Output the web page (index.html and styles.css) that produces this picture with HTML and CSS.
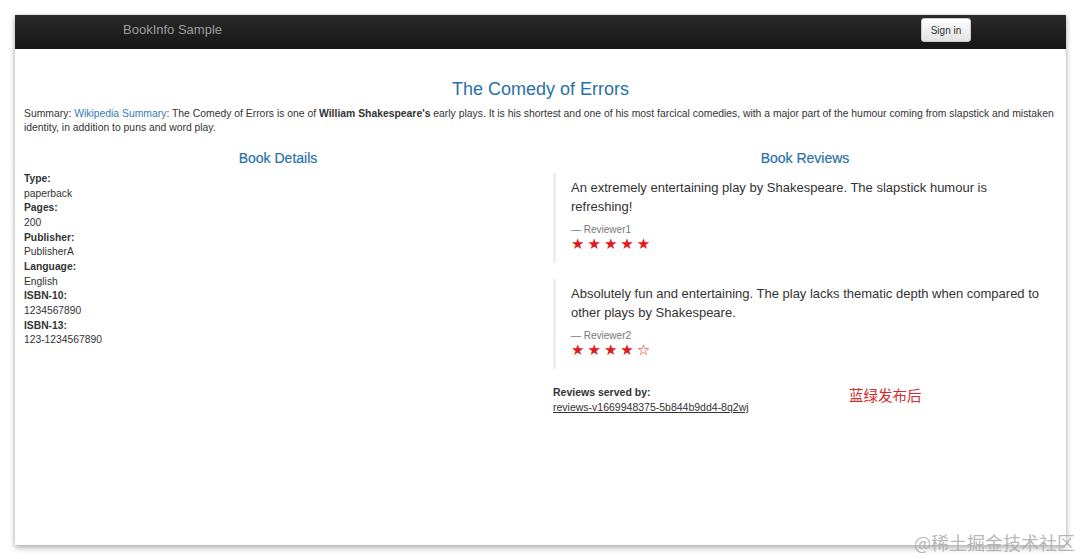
FILE: index.html
```html
<!DOCTYPE html>
<html>
<head>
<meta charset="utf-8">
<link rel="stylesheet" href="styles.css">
</head>
<body>
<div class="window">
  <nav class="navbar">
    <span class="brand">BookInfo Sample</span>
    <button class="signin">Sign in</button>
  </nav>
  <main class="content">
    <h1 class="title">The Comedy of Errors</h1>
    <p class="summary">Summary: <a href="#">Wikipedia Summary</a>: The Comedy of Errors is one of <b>William Shakespeare's</b> early plays. It is his shortest and one of his most farcical comedies, with a major part of the humour coming from slapstick and mistaken identity, in addition to puns and word play.</p>
    <div class="columns">
      <section class="details">
        <h2 class="heading">Book Details</h2>
        <dl class="dlist">
          <dt>Type:</dt><dd>paperback</dd>
          <dt>Pages:</dt><dd>200</dd>
          <dt>Publisher:</dt><dd>PublisherA</dd>
          <dt>Language:</dt><dd>English</dd>
          <dt>ISBN-10:</dt><dd>1234567890</dd>
          <dt>ISBN-13:</dt><dd>123-1234567890</dd>
        </dl>
      </section>
      <section class="reviews">
        <h2 class="heading">Book Reviews</h2>
        <blockquote class="review">
          <p class="rtext">An extremely entertaining play by Shakespeare. The slapstick humour is refreshing!</p>
          <small class="reviewer">— Reviewer1</small>
          <div class="stars">★★★★★</div>
        </blockquote>
        <blockquote class="review">
          <p class="rtext">Absolutely fun and entertaining. The play lacks thematic depth when compared to other plays by Shakespeare.</p>
          <small class="reviewer">— Reviewer2</small>
          <div class="stars">★★★★☆</div>
        </blockquote>
        <div class="served">
          <b>Reviews served by:</b>
          <a href="#">reviews-v1669948375-5b844b9dd4-8q2wj</a>
        </div>
      </section>
    </div>
  </main>
  <div class="note">蓝绿发布后</div>
</div>
<div class="watermark">@稀土掘金技术社区</div>
</body>
</html>
```
FILE: styles.css
```css
html, body {
  margin: 0;
  padding: 0;
  background: #fff;
  width: 1080px;
  height: 559px;
  overflow: hidden;
  font-family: "Liberation Sans", Arial, sans-serif;
  color: #333;
}
body {
  position: relative;
  padding: 15px 0 0 15px;
  box-sizing: border-box;
}
.window {
  position: relative;
  width: 1051px;
  height: 530px;
  background: #fff;
  box-shadow: 0 3px 6px rgba(0,0,0,0.28), 0 0 4px rgba(0,0,0,0.12);
}
.navbar {
  height: 34px;
  background: linear-gradient(#2a2a2a, #161616);
  display: flex;
  align-items: flex-start;
  justify-content: space-between;
  padding: 3px 95px 0 108px;
  box-sizing: border-box;
}
.brand {
  color: #9d9d9d;
  font-size: 13px;
  line-height: 24px;
}
.signin {
  width: 50px;
  height: 24px;
  background: linear-gradient(#fff, #e2e2e2);
  border: 1px solid #ccc;
  border-radius: 3px;
  font-family: "Liberation Sans", Arial, sans-serif;
  font-size: 10px;
  color: #333;
  padding: 0;
}
.content {
  padding: 0 9px;
}
.title {
  margin: 29px 0 0;
  text-align: center;
  font-size: 18px;
  font-weight: normal;
  color: #2a6fa8;
  line-height: 22px;
}
.summary {
  margin: 7px 0 0;
  font-size: 10.38px;
  line-height: 14px;
}
.summary a {
  color: #337ab7;
  text-decoration: none;
}
.columns {
  display: grid;
  grid-template-columns: 508px 1fr;
  column-gap: 21px;
  margin-top: 15px;
}
.heading {
  margin: 0;
  text-align: center;
  font-size: 14px;
  font-weight: normal;
  color: #2a6fa8;
  line-height: 16px;
  -webkit-text-stroke: 0.2px #2a6fa8;
}
.dlist {
  margin: 6px 0 0;
  font-size: 10.3px;
  line-height: 14.65px;
}
.dlist dt { font-weight: bold; }
.dlist dd { margin: 0; }
.review {
  margin: 7px 0 16px;
  padding: 6px 15px 12px 15px;
  border-left: 3px solid #eee;
}
.rtext {
  margin: 0 0 7px;
  font-size: 13px;
  line-height: 18.5px;
  color: #333;
}
.reviewer {
  display: block;
  font-size: 10px;
  line-height: 14px;
  color: #777;
}
.stars {
  font-size: 15px;
  line-height: 14px;
  color: #e01b1b;
  letter-spacing: 3px;
  font-family: "DejaVu Sans", sans-serif;
}
.served {
  font-size: 10.5px;
  line-height: 15px;
  margin-top: 14px;
}
.served b { display: block; }
.served a {
  color: #333;
  text-decoration: underline;
}
.note {
  position: absolute;
  left: 834px;
  top: 369px;
  font-family: "Noto Sans CJK SC", sans-serif;
  font-size: 14.5px;
  color: #d42a2a;
}
.watermark {
  position: absolute;
  right: 5px;
  bottom: 4px;
  font-family: "Noto Sans CJK SC", sans-serif;
  font-size: 18px;
  color: rgba(170,170,170,0.85);
}
```
